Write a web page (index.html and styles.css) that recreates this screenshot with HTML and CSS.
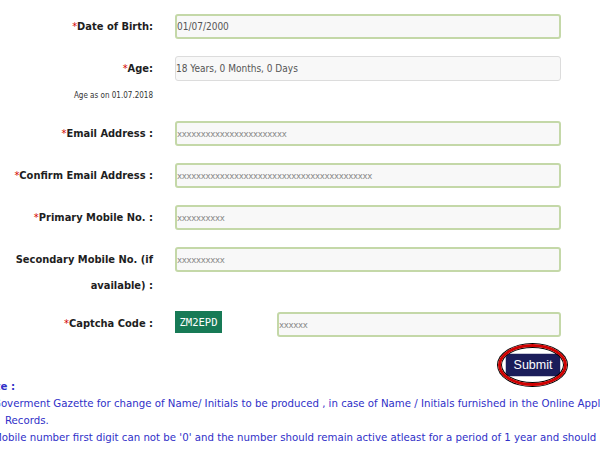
FILE: index.html
```html
<!DOCTYPE html>
<html>
<head>
<meta charset="utf-8">
<link rel="stylesheet" href="styles.css">
</head>
<body>
<div class="form">
  <div class="row">
    <div class="lbl"><span class="req">*</span>Date of Birth:</div>
    <div class="field"><input class="inp ok val" value="01/07/2000"></div>
  </div>
  <div class="row">
    <div class="lbl"><span class="req">*</span>Age:<div class="age-note">Age as on 01.07.2018</div></div>
    <div class="field"><input class="inp dis val" value="18 Years, 0 Months, 0 Days"></div>
  </div>
  <div class="row">
    <div class="lbl"><span class="req">*</span>Email Address :</div>
    <div class="field"><input class="inp ok ph" value="xxxxxxxxxxxxxxxxxxxxxxx"></div>
  </div>
  <div class="row">
    <div class="lbl"><span class="req">*</span>Confirm Email Address :</div>
    <div class="field"><input class="inp ok ph" value="xxxxxxxxxxxxxxxxxxxxxxxxxxxxxxxxxxxxxxxxx"></div>
  </div>
  <div class="row">
    <div class="lbl"><span class="req">*</span>Primary Mobile No. :</div>
    <div class="field"><input class="inp ok ph" value="xxxxxxxxxx"></div>
  </div>
  <div class="row row-tight">
    <div class="lbl">Secondary Mobile No. (if available) :</div>
    <div class="field"><input class="inp ok ph" value="xxxxxxxxxx"></div>
  </div>
  <div class="row">
    <div class="lbl"><span class="req">*</span>Captcha Code :</div>
    <div class="field captcha-field">
      <div class="captcha">ZM2EPD</div>
      <input class="inp ok ph cap-inp" value="xxxxxx">
    </div>
  </div>
  <div class="submit-row">
    <div class="submit-wrap">
      <button class="submit">Submit</button>
      <span class="ring"></span>
    </div>
  </div>
</div>
<div class="notes">
  <div class="note-title">Note :</div>
  <div class="note-line">1. Goverment Gazette for change of Name/ Initials to be produced , in case of Name / Initials furnished in the Online Application differs from the Matriculation</div>
  <div class="note-line cont">Records.</div>
  <div class="note-line">2. Mobile number first digit can not be '0' and the number should remain active atleast for a period of 1 year and should not be changed.</div>
</div>
</body>
</html>
```
FILE: styles.css
```css
html, body {
  margin: 0;
  padding: 0;
  overflow: hidden;
  background: #ffffff;
}
body {
  width: 600px;
  height: 450px;
  font-family: "DejaVu Sans Condensed", "DejaVu Sans", sans-serif;
  color: #222222;
}
.form {
  padding-top: 14px;
  display: flex;
  flex-direction: column;
  gap: 16px;
}
.row {
  display: grid;
  grid-template-columns: 153px 386px;
  column-gap: 22px;
  align-items: start;
}
.row-tight {
  margin-bottom: -4px;
}
.lbl {
  text-align: right;
  font-weight: bold;
  font-size: 11px;
  line-height: 26px;
  color: #1e1e1e;
}
.req {
  color: #d40000;
  font-weight: normal;
}
.age-note {
  font-weight: normal;
  font-size: 8px;
  line-height: 14px;
  margin-top: 7px;
  margin-bottom: 2px;
  color: #333333;
}
.field {
  display: flex;
}
.inp {
  box-sizing: border-box;
  width: 386px;
  height: 25px;
  margin: 0;
  padding: 0;
  border-radius: 3px;
  background: #f8f8f8;
  font-family: "DejaVu Sans Condensed", "DejaVu Sans", sans-serif;
  font-size: 10px;
  outline: none;
}
.ok {
  border: 2px solid #c4d8a8;
}
.dis {
  border: 1px solid #dcdcdc;
}
.val {
  color: #555555;
}
.ph {
  color: #8a8a8a;
  font-size: 9.5px;
  letter-spacing: -0.3px;
}
.captcha-field {
  align-items: flex-start;
  gap: 55px;
}
.captcha {
  width: 47px;
  height: 22px;
  background: #177a56;
  color: #ffffff;
  font-family: "DejaVu Sans Mono", monospace;
  font-size: 10.5px;
  line-height: 22px;
  text-align: center;
}
.cap-inp {
  width: 284px;
  margin-top: 1px;
}
.submit-row {
  display: flex;
  justify-content: flex-end;
  width: 561px;
}
.submit-wrap {
  position: relative;
  width: 56px;
  height: 24px;
}
.submit {
  width: 56px;
  height: 24px;
  padding: 0;
  border: 1px solid #c8c8d8;
  border-radius: 4px;
  background: #1b1d5a;
  color: #ffffff;
  font-family: "Liberation Sans", Arial, sans-serif;
  font-size: 12.5px;
}
.ring {
  position: absolute;
  left: -7px;
  right: -6px;
  top: -9px;
  bottom: -9px;
  border-radius: 50%;
  border: 3px solid #d00000;
  box-shadow: 0 0 0 1px #000000, inset 0 0 0 1px #000000;
}
.notes {
  margin-left: -20px;
  margin-top: 1px;
  color: #3030c8;
  font-size: 11.35px;
  line-height: 17px;
  white-space: nowrap;
}
.note-title {
  font-weight: bold;
}
.cont {
  padding-left: 25px;
}
```
